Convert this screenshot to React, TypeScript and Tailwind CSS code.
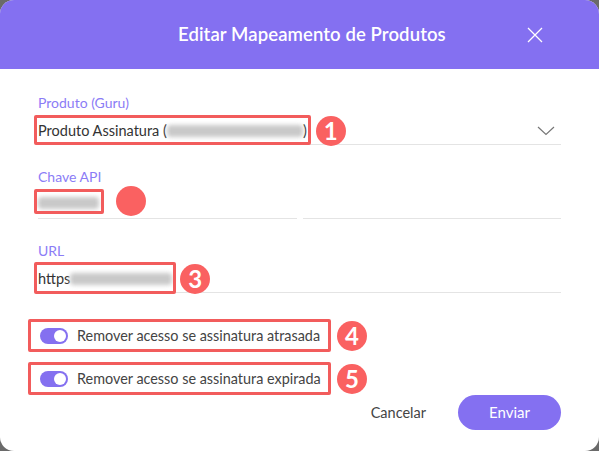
import React from "react";

const font = { fontFamily: "Lato, 'Open Sans', sans-serif" };

function Badge({ n, className }: { n?: string; className: string }) {
  return (
    <span
      className={
        "absolute top-1/2 -translate-y-1/2 w-[30px] h-[30px] rounded-full bg-[#fa6161] text-white flex items-center justify-center text-[24px] font-bold leading-none " +
        className
      }
    >
      {n}
    </span>
  );
}

function Blur({ w }: { w: string }) {
  return <span className={"inline-block h-[12px] rounded-sm bg-[#c9c9c9] blur-[2px] " + w} />;
}

function Toggle() {
  return (
    <span className="relative inline-flex w-[28px] h-[16px] rounded-full bg-[#8470f0] shrink-0">
      <span className="absolute right-[2px] top-[2px] w-[12px] h-[12px] rounded-full bg-white" />
    </span>
  );
}

export default function App() {
  return (
    <div className="w-[599px] h-[451px] bg-[#6a6a6a]" style={font}>
      <div className="w-full h-full bg-white rounded-[14px] overflow-hidden flex flex-col">
        <div className="h-[69px] bg-[#8470f1] flex items-center pl-[178px] pr-[56px] shrink-0">
          <span className="text-white text-[18.5px] font-semibold tracking-[0.1px]">Editar Mapeamento de Produtos</span>
          <svg className="ml-auto" width="16" height="16" viewBox="0 0 16 16" fill="none">
            <path d="M1 1 L15 15 M15 1 L1 15" stroke="white" strokeWidth="1.3" />
          </svg>
        </div>

        <div className="flex-1 flex flex-col px-[38px] pt-[26px]">
          {/* Produto */}
          <div className="flex flex-col">
            <span className="text-[14px] leading-4 text-[#8b7cf6]">Produto (Guru)</span>
            <div className="mt-[6px] h-[28px] border-b border-[#e4e4e4] flex items-center">
              <span className="relative flex items-center text-[14.5px] text-[#333]">
                Produto Assinatura (<Blur w="w-[136px]" />)
                <span className="absolute -left-[4px] -right-[4px] -top-[5px] -bottom-[4px] border-[3px] border-[#f25c5c] rounded-[2px]" />
                <Badge n="1" className="left-full ml-[9px]" />
              </span>
              <svg className="ml-auto mr-[6px]" width="18" height="10" viewBox="0 0 18 10" fill="none">
                <path d="M1 1 L9 8.5 L17 1" stroke="#777" strokeWidth="1.2" />
              </svg>
            </div>
          </div>

          {/* Chave API */}
          <div className="flex flex-col mt-6">
            <span className="text-[14px] leading-4 text-[#8b7cf6]">Chave API</span>
            <div className="mt-[6px] grid grid-cols-2 gap-[6px]">
              <div className="h-[28px] border-b border-[#e4e4e4] flex items-center">
                <span className="relative flex items-center -mt-[3px]">
                  <Blur w="w-[61px]" />
                  <span className="absolute -left-[4px] -right-[5px] -top-[8px] -bottom-[5px] border-[3px] border-[#f25c5c] rounded-[2px]" />
                  <Badge className="left-full ml-[17px] -mt-[2px]" />
                </span>
              </div>
              <div className="h-[28px] border-b border-[#e4e4e4]" />
            </div>
          </div>

          {/* URL */}
          <div className="flex flex-col mt-6">
            <span className="text-[14px] leading-4 text-[#8b7cf6]">URL</span>
            <div className="mt-[6px] h-[28px] border-b border-[#e4e4e4] flex items-center">
              <span className="relative flex items-center text-[14.5px] text-[#333]">
                https<Blur w="w-[102px]" />
                <span className="absolute -left-[4px] -right-[4px] -top-[6px] -bottom-[5px] border-[3px] border-[#f25c5c] rounded-[2px]" />
                <Badge n="3" className="left-full ml-[8px]" />
              </span>
            </div>
          </div>

          {/* Toggles */}
          <div className="flex flex-col gap-[10px] mt-[26px] -ml-[10px]">
            {["Remover acesso se assinatura atrasada", "Remover acesso se assinatura expirada"].map((t, i) => (
              <div key={t} className="relative w-[303px] h-[33px] border-[3px] border-[#f25c5c] rounded-[2px] flex items-center gap-[9px] pl-[9px]">
                <Toggle />
                <span className="text-[14.4px] text-[#444] whitespace-nowrap">{t}</span>
                <Badge n={i === 0 ? "4" : "5"} className="left-full ml-[9px]" />
              </div>
            ))}
          </div>

          <div className="flex items-center justify-end mt-0 gap-[32px]">
            <span className="text-[14.5px] text-[#444]">Cancelar</span>
            <button className="w-[103px] h-[35px] rounded-full bg-[#8470f1] text-white text-[15px]">Enviar</button>
          </div>
        </div>
      </div>
    </div>
  );
}
